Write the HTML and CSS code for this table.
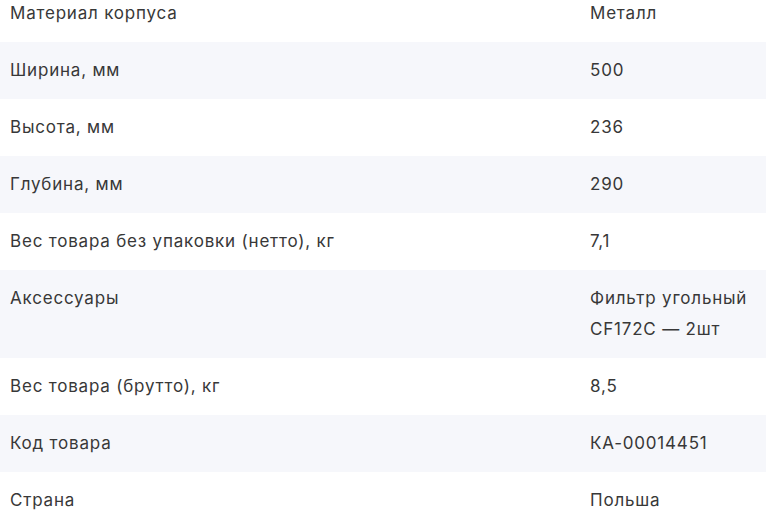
FILE: index.html
```html
<!DOCTYPE html>
<html lang="ru">
<head>
<meta charset="utf-8">
<link rel="stylesheet" href="styles.css">
</head>
<body>
<div class="specs">
  <div class="row"><div class="label">Материал корпуса</div><div class="value">Металл</div></div>
  <div class="row"><div class="label">Ширина, мм</div><div class="value">500</div></div>
  <div class="row"><div class="label">Высота, мм</div><div class="value">236</div></div>
  <div class="row"><div class="label">Глубина, мм</div><div class="value">290</div></div>
  <div class="row"><div class="label">Вес товара без упаковки (нетто), кг</div><div class="value">7,1</div></div>
  <div class="row"><div class="label">Аксессуары</div><div class="value">Фильтр угольный CF172C — 2шт</div></div>
  <div class="row"><div class="label">Вес товара (брутто), кг</div><div class="value">8,5</div></div>
  <div class="row"><div class="label">Код товара</div><div class="value">КА-00014451</div></div>
  <div class="row"><div class="label">Страна</div><div class="value">Польша</div></div>
</div>
</body>
</html>
```
FILE: styles.css
```css
html, body {
  margin: 0;
  padding: 0;
  background: #ffffff;
}
body {
  font-family: Inter, "Noto Sans", sans-serif;
  font-size: 17px;
  letter-spacing: 0.8px;
  color: #383838;
  overflow: hidden;
}
.specs {
  margin-top: -15px;
  display: flex;
  flex-direction: column;
}
.row {
  display: grid;
  grid-template-columns: 1fr 166px;
  column-gap: 10px;
  padding: 13px 10px;
  line-height: 31px;
}
.row:nth-child(even) {
  background: #f6f7fb;
}
```
